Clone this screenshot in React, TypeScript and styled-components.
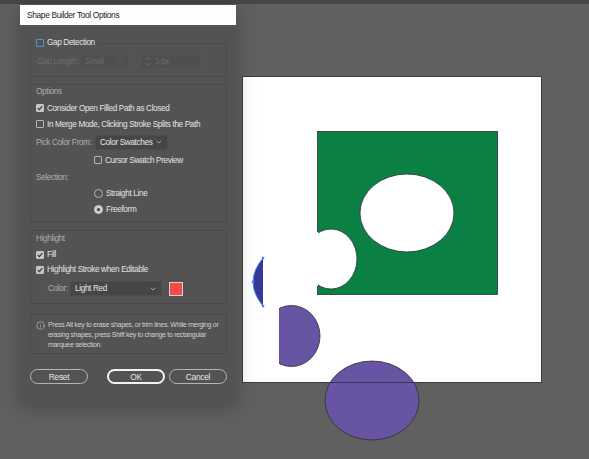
import styled, { createGlobalStyle } from 'styled-components'
import { ChevronDown, Info } from 'lucide-react'

const GlobalStyle = createGlobalStyle`
  html, body {
    margin: 0;
    padding: 0;
  }
  body {
    background: #606060;
    font-family: "Liberation Sans", Arial, sans-serif;
  }
`

const Workspace = styled.div`
  position: relative;
  width: 589px;
  height: 459px;
  overflow: hidden;
  display: flex;
  flex-direction: column;
  background: #606060;
`

const TopBar = styled.div`
  height: 4px;
  flex-shrink: 0;
  background: #474747;
`

const Canvas = styled.div`
  flex: 1;
  svg {
    display: block;
    width: 100%;
    height: 100%;
  }
`

const Dialog = styled.div`
  position: absolute;
  left: 20px;
  top: 5px;
  width: 216px;
  height: 399px;
  display: flex;
  flex-direction: column;
  background: #535353;
  box-shadow: 0 2px 18px rgba(0, 0, 0, 0.28);
  font-size: 8.2px;
  letter-spacing: -0.35px;
  color: #e4e4e4;
`

const TitleBar = styled.div`
  height: 20px;
  display: flex;
  align-items: center;
  padding-left: 7px;
  background: #fdfdfd;
  color: #1e1e1e;
  font-size: 8.4px;
`

const Body = styled.div`
  flex: 1;
  display: flex;
  flex-direction: column;
  padding: 13px 9px 0 10px;
`

const Fieldset = styled.fieldset`
  margin: 0;
  min-width: 0;
  padding: 6px 5px 7px;
  border: 1px solid #4a4a4a;
  legend {
    padding: 0 2px 0 0;
    height: 10px;
    line-height: 10px;
    display: flex;
    align-items: center;
    gap: 3px;
  }
`

const Group = styled.div<{ $top: number; $padTop: number; $padBottom: number }>`
  margin-top: ${(p) => p.$top}px;
  padding: ${(p) => p.$padTop}px 5px ${(p) => p.$padBottom}px;
  border: 1px solid #4a4a4a;
  display: flex;
  flex-direction: column;
`

const Heading = styled.div`
  height: 12px;
  line-height: 12px;
  color: #adadad;
`

const Row = styled.div<{ $h?: number; $mt?: number; $indent?: number }>`
  height: ${(p) => p.$h ?? 16}px;
  margin-top: ${(p) => p.$mt ?? 0}px;
  margin-left: ${(p) => p.$indent ?? 0}px;
  display: flex;
  align-items: center;
  gap: 3px;
  white-space: nowrap;
`

const FieldLabel = styled.span<{ $w: number; $dim?: boolean }>`
  width: ${(p) => p.$w}px;
  flex-shrink: 0;
  color: ${(p) => (p.$dim ? '#6c6c6c' : '#b0b0b0')};
`

const Box = styled.span<{ $checked?: boolean; $focus?: boolean }>`
  width: 8px;
  height: 8px;
  flex-shrink: 0;
  box-sizing: border-box;
  border-radius: 1px;
  border: 1px solid ${(p) => (p.$focus ? '#5b8fd4' : p.$checked ? '#c6c6c6' : '#b5b5b5')};
  background: ${(p) => (p.$checked ? '#c6c6c6' : 'transparent')};
  display: flex;
  align-items: center;
  justify-content: center;
  svg {
    display: block;
  }
`

const Radio = styled.span<{ $on?: boolean }>`
  width: 9px;
  height: 9px;
  flex-shrink: 0;
  box-sizing: border-box;
  border-radius: 50%;
  border: 1px solid ${(p) => (p.$on ? '#cdcdcd' : '#b5b5b5')};
  background: ${(p) => (p.$on ? '#cdcdcd' : 'transparent')};
  display: flex;
  align-items: center;
  justify-content: center;
  &::after {
    content: '';
    width: 3px;
    height: 3px;
    border-radius: 50%;
    background: ${(p) => (p.$on ? '#3d3d3d' : 'transparent')};
  }
`

const Select = styled.div<{ $w: number; $disabled?: boolean }>`
  width: ${(p) => p.$w}px;
  height: 15px;
  flex-shrink: 0;
  box-sizing: border-box;
  display: flex;
  align-items: center;
  justify-content: space-between;
  padding: 0 4px 0 4px;
  background: ${(p) => (p.$disabled ? '#4f4f4f' : '#464646')};
  border: 1px solid ${(p) => (p.$disabled ? '#545454' : '#4d4d4d')};
  color: ${(p) => (p.$disabled ? '#6a6a6a' : '#e6e6e6')};
`

const Spinner = styled.div`
  width: 61px;
  height: 15px;
  margin-left: 8px;
  box-sizing: border-box;
  display: flex;
  align-items: center;
  gap: 4px;
  padding-left: 3px;
  background: #4f4f4f;
  border: 1px solid #545454;
  color: #6a6a6a;
`

const Swatch = styled.span<{ $color: string }>`
  width: 14px;
  height: 14px;
  margin-left: 7px;
  box-sizing: border-box;
  background: ${(p) => p.$color};
  border: 1px solid #d4d4d4;
`

const InfoBox = styled.div`
  margin-top: 10px;
  height: 40px;
  box-sizing: border-box;
  padding: 5px 5px 0;
  border: 1px solid #4a4a4a;
  display: flex;
  gap: 3px;
  color: #d0d0d0;
  font-size: 7px;
  letter-spacing: -0.3px;
  line-height: 10px;
  white-space: nowrap;
  svg {
    flex-shrink: 0;
    margin-top: 0.5px;
  }
`

const Buttons = styled.div`
  margin-top: 15px;
  display: flex;
  justify-content: space-between;
`

const ButtonGroup = styled.div`
  display: flex;
  gap: 4px;
`

const Button = styled.button<{ $primary?: boolean }>`
  width: 58px;
  height: 15px;
  padding: 0;
  box-sizing: border-box;
  border-radius: 8px;
  background: transparent;
  border: ${(p) => (p.$primary ? '2px solid #f2f2f2' : '1px solid #b4b4b4')};
  color: #e6e6e6;
  font-family: inherit;
  font-size: 8.4px;
  letter-spacing: -0.3px;
`

const Check = ({ checked, focus }: { checked?: boolean; focus?: boolean }) => (
  <Box $checked={checked} $focus={focus}>
    {checked && (
      <svg width="6" height="6" viewBox="0 0 6 6">
        <path d="M0.8 3 L2.4 4.6 L5.3 1.2" fill="none" stroke="#3a3a3a" strokeWidth="1.2" />
      </svg>
    )}
  </Box>
)

const Chevron = ({ color }: { color: string }) => <ChevronDown size={8} color={color} strokeWidth={2} />

const Artwork = () => (
  <svg viewBox="0 4 589 455">
    <defs>
      <clipPath id="greenClip">
        <rect x="317.5" y="131.5" width="180" height="163" />
      </clipPath>
      <clipPath id="dClip">
        <rect x="279" y="290" width="60" height="90" />
      </clipPath>
    </defs>
    <rect x="242.5" y="76.5" width="299" height="306" fill="#ffffff" stroke="#3c3c3c" strokeWidth="1" />
    <rect x="317.5" y="131.5" width="180" height="163" fill="#0b8045" stroke="#2e2e2e" strokeWidth="0.8" />
    <ellipse cx="407" cy="213" rx="47" ry="39" fill="#ffffff" stroke="#2e2e2e" strokeWidth="0.8" />
    <ellipse cx="331" cy="259" rx="26" ry="30" fill="#ffffff" stroke="#2e2e2e" strokeWidth="0.8" clipPath="url(#greenClip)" />
    <rect x="316" y="232" width="2" height="54" fill="#ffffff" />
    <path d="M263 258 Q243 282 263 306 Z" fill="#343a96" />
    <path d="M263 258 Q243 282 263 306" fill="none" stroke="#4d7fff" strokeWidth="0.9" />
    <rect x="261.8" y="256.8" width="2.4" height="2.4" fill="#4d7fff" />
    <rect x="261.8" y="304.8" width="2.4" height="2.4" fill="#4d7fff" />
    <rect x="251.8" y="280.8" width="2.4" height="2.4" fill="#4d7fff" />
    <ellipse cx="291.5" cy="336" rx="28.5" ry="30.5" fill="#6754a3" stroke="#2e2e2e" strokeWidth="0.8" clipPath="url(#dClip)" />
    <ellipse cx="372" cy="400.5" rx="47" ry="39.5" fill="#6754a3" stroke="#2e2e2e" strokeWidth="0.8" />
    <line x1="325" y1="382.5" x2="419" y2="382.5" stroke="#3b3163" strokeWidth="1" />
  </svg>
)

const App = () => {
  return (
    <>
      <GlobalStyle />
      <Workspace>
        <TopBar />
        <Canvas>
          <Artwork />
        </Canvas>

        <Dialog>
          <TitleBar>Shape Builder Tool Options</TitleBar>
          <Body>
            <Fieldset>
              <legend>
                <Check focus />
                <span>Gap Detection</span>
              </legend>
              <Row $h={15} style={{ paddingLeft: 1 }}>
                <FieldLabel $w={40} $dim>
                  Gap Length:
                </FieldLabel>
                <Select $w={49} $disabled>
                  <span>Small</span>
                  <Chevron color="#6a6a6a" />
                </Select>
                <Spinner>
                  <svg width="7" height="11" viewBox="0 0 7 11">
                    <path d="M1 4 L3.5 1.5 L6 4 M1 7 L3.5 9.5 L6 7" fill="none" stroke="#6a6a6a" strokeWidth="1" />
                  </svg>
                  <span>3 px</span>
                </Spinner>
              </Row>
            </Fieldset>

            <Group $top={7} $padTop={1} $padBottom={4}>
              <Heading>Options</Heading>
              <Row $mt={2}>
                <Check checked />
                <span>Consider Open Filled Path as Closed</span>
              </Row>
              <Row>
                <Check />
                <span>In Merge Mode, Clicking Stroke Splits the Path</span>
              </Row>
              <Row $mt={2} style={{ gap: 0 }}>
                <FieldLabel $w={59}>Pick Color From:</FieldLabel>
                <Select $w={73}>
                  <span>Color Swatches</span>
                  <Chevron color="#d0d0d0" />
                </Select>
              </Row>
              <Row $mt={2} $indent={58}>
                <Check />
                <span>Cursor Swatch Preview</span>
              </Row>
              <Row $mt={1}>
                <FieldLabel $w={50}>Selection:</FieldLabel>
              </Row>
              <Row $indent={58}>
                <Radio />
                <span>Straight Line</span>
              </Row>
              <Row $indent={58}>
                <Radio $on />
                <span>Freeform</span>
              </Row>
            </Group>

            <Group $top={8} $padTop={2} $padBottom={6}>
              <Heading>Highlight</Heading>
              <Row $h={15} $mt={2}>
                <Check checked />
                <span>Fill</span>
              </Row>
              <Row $h={15}>
                <Check checked />
                <span>Highlight Stroke when Editable</span>
              </Row>
              <Row $h={17} $mt={3} $indent={12} style={{ gap: 0 }}>
                <FieldLabel $w={22}>Color:</FieldLabel>
                <Select $w={92}>
                  <span>Light Red</span>
                  <Chevron color="#d0d0d0" />
                </Select>
                <Swatch $color="#f44a4a" />
              </Row>
            </Group>

            <InfoBox>
              <Info size={9} color="#c8c8c8" strokeWidth={1.6} />
              <div>
                Press Alt key to erase shapes, or trim lines. While merging or
                <br />
                erasing shapes, press Shift key to change to rectangular
                <br />
                marquee selection.
              </div>
            </InfoBox>

            <Buttons>
              <Button>Reset</Button>
              <ButtonGroup>
                <Button $primary>OK</Button>
                <Button>Cancel</Button>
              </ButtonGroup>
            </Buttons>
          </Body>
        </Dialog>
      </Workspace>
    </>
  )
}

export default App
